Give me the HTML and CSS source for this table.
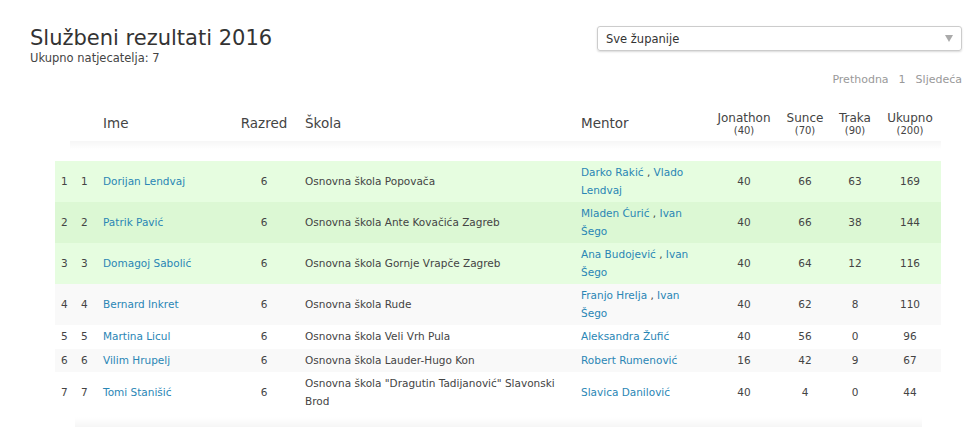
FILE: index.html
```html
<!DOCTYPE html>
<html lang="hr">
<head>
    <meta charset="UTF-8" />
    <title>Službeni rezultati 2016</title>
    <link rel="stylesheet" href="styles.css">
</head>
<body>
<div class="page">
  <div class="top">
    <div class="heading">
      <h1>Službeni rezultati 2016</h1>
      <div class="count">Ukupno natjecatelja: 7</div>
    </div>
    <div class="select">
      <span>Sve županije</span>
      <span class="arrow"></span>
    </div>
  </div>

  <div class="pager">
    <a>Prethodna</a>
    <a>1</a>
    <a>Sljedeća</a>
  </div>

  <table class="results">
    <colgroup>
      <col style="width:20px"><col style="width:22px"><col style="width:132px"><col style="width:70px">
      <col style="width:276px"><col style="width:134px"><col style="width:70px"><col style="width:52px">
      <col style="width:48px"><col style="width:62px">
    </colgroup>
    <thead>
      <tr>
        <th></th>
        <th></th>
        <th class="left">Ime</th>
        <th>Razred</th>
        <th class="left">Škola</th>
        <th class="left">Mentor</th>
        <th class="task">Jonathon<small>(40)</small></th>
        <th class="task">Sunce<small>(70)</small></th>
        <th class="task">Traka<small>(90)</small></th>
        <th class="task">Ukupno<small>(200)</small></th>
      </tr>
      <tr class="shade"><td colspan="10"><div></div></td></tr>
    </thead>
    <tbody>
      <tr class="medal">
        <td>1</td><td>1</td><td><a>Dorijan Lendvaj</a></td><td class="num">6</td>
        <td>Osnovna škola Popovača</td>
        <td class="mentor"><a>Darko Rakić</a> , <a>Vlado Lendvaj</a></td>
        <td class="num">40</td><td class="num">66</td><td class="num">63</td><td class="num">169</td>
      </tr>
      <tr class="medal">
        <td>2</td><td>2</td><td><a>Patrik Pavić</a></td><td class="num">6</td>
        <td>Osnovna škola Ante Kovačića Zagreb</td>
        <td class="mentor"><a>Mladen Ćurić</a> , <a>Ivan Šego</a></td>
        <td class="num">40</td><td class="num">66</td><td class="num">38</td><td class="num">144</td>
      </tr>
      <tr class="medal">
        <td>3</td><td>3</td><td><a>Domagoj Sabolić</a></td><td class="num">6</td>
        <td>Osnovna škola Gornje Vrapče Zagreb</td>
        <td class="mentor"><a>Ana Budojević</a> , <a>Ivan Šego</a></td>
        <td class="num">40</td><td class="num">64</td><td class="num">12</td><td class="num">116</td>
      </tr>
      <tr>
        <td>4</td><td>4</td><td><a>Bernard Inkret</a></td><td class="num">6</td>
        <td>Osnovna škola Rude</td>
        <td class="mentor"><a>Franjo Hrelja</a> , <a>Ivan Šego</a></td>
        <td class="num">40</td><td class="num">62</td><td class="num">8</td><td class="num">110</td>
      </tr>
      <tr>
        <td>5</td><td>5</td><td><a>Martina Licul</a></td><td class="num">6</td>
        <td>Osnovna škola Veli Vrh Pula</td>
        <td class="mentor"><a>Aleksandra Žufić</a></td>
        <td class="num">40</td><td class="num">56</td><td class="num">0</td><td class="num">96</td>
      </tr>
      <tr>
        <td>6</td><td>6</td><td><a>Vilim Hrupelj</a></td><td class="num">6</td>
        <td>Osnovna škola Lauder-Hugo Kon</td>
        <td class="mentor"><a>Robert Rumenović</a></td>
        <td class="num">16</td><td class="num">42</td><td class="num">9</td><td class="num">67</td>
      </tr>
      <tr>
        <td>7</td><td>7</td><td><a>Tomi Stanišić</a></td><td class="num">6</td>
        <td>Osnovna škola "Dragutin Tadijanović" Slavonski Brod</td>
        <td class="mentor"><a>Slavica Danilović</a></td>
        <td class="num">40</td><td class="num">4</td><td class="num">0</td><td class="num">44</td>
      </tr>
    </tbody>
  </table>
  <div class="footer-shade"></div>
</div>
</body>
</html>
```

FILE: styles.css
```css
body {
    margin: 0;
    background-color: #fff;
    color: #444;
    font-family: "DejaVu Sans", Verdana, sans-serif;
    font-size: 10.5px;
}
.page {
    padding: 24px 15px 0 30px;
}
.top {
    display: flex;
    justify-content: space-between;
    align-items: flex-start;
}
h1 {
    margin: 0;
    font-size: 21px;
    font-weight: normal;
    color: #333;
    line-height: 28px;
}
.count {
    font-size: 11.5px;
    color: #444;
    line-height: 13px;
}
.select {
    width: 347px;
    height: 23px;
    margin-top: 2px;
    padding: 0 8px;
    border: 1px solid #ccc;
    border-radius: 3px;
    box-shadow: 0 1px 2px rgba(0,0,0,0.15);
    display: flex;
    align-items: center;
    justify-content: space-between;
    color: #333;
    font-size: 11.5px;
}
.arrow {
    width: 0;
    height: 0;
    border-left: 4px solid transparent;
    border-right: 4px solid transparent;
    border-top: 7px solid #aaa;
}
.pager {
    display: flex;
    justify-content: flex-end;
    gap: 10px;
    margin-top: 8px;
    color: #999;
    font-size: 11px;
}
table.results {
    margin: 19px 0 0 25px;
    width: 886px;
    table-layout: fixed;
    border-collapse: collapse;
}
.results th {
    font-weight: normal;
    font-size: 13.5px;
    color: #444;
    height: 36px;
    padding: 0 6px;
    vertical-align: middle;
}
.results th.left {
    text-align: left;
}
.results th.task {
    font-size: 12px;
    line-height: 14px;
    padding: 0;
}
.results th small {
    display: block;
    font-size: 10px;
    line-height: 11px;
}
.results tr.shade td {
    padding: 0 0 0 15px;
    height: 20px;
    vertical-align: top;
}
.results tr.shade div {
    height: 8px;
    background: linear-gradient(rgba(0,0,0,0.035), rgba(0,0,0,0));
}
.results td {
    padding: 3px 6px;
    line-height: 17.5px;
    vertical-align: middle;
}
.results td.num {
    text-align: center;
}
.results td.mentor {
    padding-right: 14px;
}
.results tbody tr:nth-child(even) {
    background-color: #f9f9f9;
}
.results tbody tr.medal {
    background-color: #e6fde0;
}
.results tbody tr.medal:nth-child(even) {
    background-color: #dcf8d4;
}
.results a {
    color: #2a86b5;
}
.footer-shade {
    margin: 4px 40px 0 45px;
    height: 10px;
    background: linear-gradient(rgba(0,0,0,0), rgba(0,0,0,0.04));
}
```
